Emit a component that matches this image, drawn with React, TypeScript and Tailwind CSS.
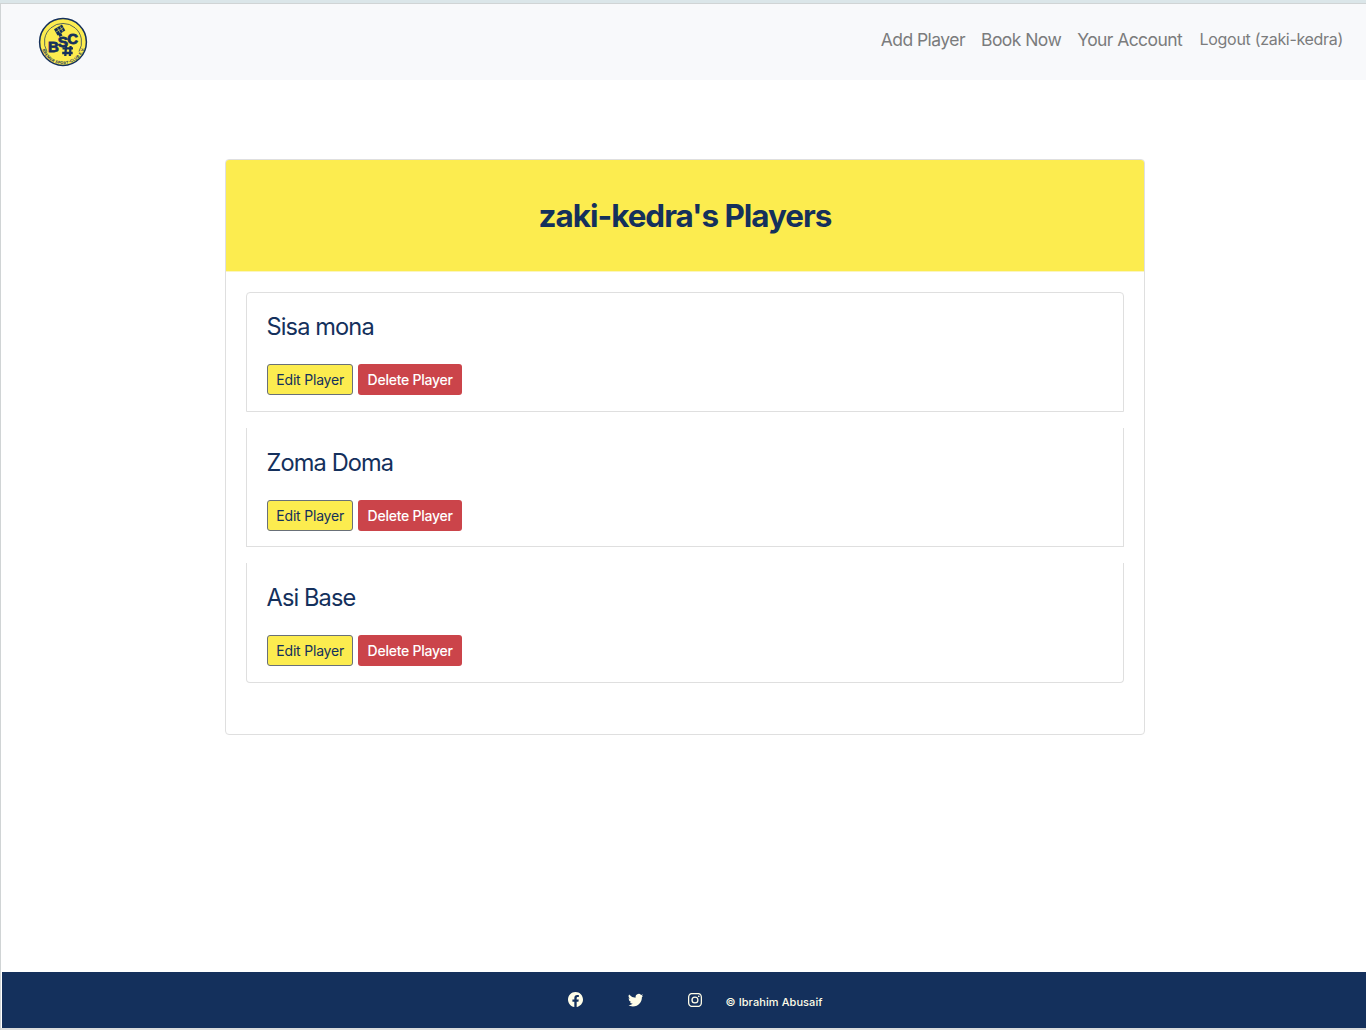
import { BsFacebook, BsInstagram, BsTwitter } from "react-icons/bs";

const players = ["Sisa mona", "Zoma Doma", "Asi Base"];

function Logo() {
  return (
    <svg width="50" height="50" viewBox="0 0 50 50" aria-label="BSC logo">
      <defs>
        <path id="ring" d="M2.9 27 A22.2 22.2 0 0 0 47.1 27" />
      </defs>
      <circle cx="25" cy="25" r="23.4" fill="#fcec4f" stroke="#14305c" strokeWidth="1.5" />
      <path d="M9 34.5 A18.6 18.6 0 1 1 41 34.5" fill="none" stroke="#14305c" strokeWidth="0.7" />
      <g fill="#14305c">
        <path d="M16 12.2 L24 7.5 L27.3 13.5 L19.5 18.5 Z" />
        <path d="M19.5 16.5 L22.6 15 L24.5 18.5 L21.5 20 Z" />
      </g>
      <path
        d="M28 29 L27.3 39 M32.6 29 L31.9 39 M24.5 31.4 H35 M24.2 36 H34.7"
        fill="none"
        stroke="#14305c"
        strokeWidth="2.3"
      />
      <path
        d="M18 15 L25.5 10.5 M19.4 10.8 L22.4 16.2 M22 9.4 L25 14.6"
        stroke="#fcec4f"
        strokeWidth="0.6"
        fill="none"
      />
      <g
        fill="#14305c"
        stroke="#14305c"
        strokeWidth="0.8"
        fontFamily="'Liberation Sans', sans-serif"
        fontWeight="700"
      >
        <text x="10" y="35" fontSize="15">B</text>
        <text x="19.8" y="29.6" fontSize="15.5">S</text>
        <text x="29.2" y="26.6" fontSize="15">C</text>
      </g>
      <text fill="#14305c" fontFamily="Inter, sans-serif" fontWeight="700" fontSize="3.8">
        <textPath href="#ring" startOffset="6" textLength="55">BREMER SPORT-CLUB E.V.</textPath>
      </text>
    </svg>
  );
}

function PlayerRow({ name, first, last }: { name: string; first: boolean; last: boolean }) {
  const edges = first
    ? "h-[120px] border rounded-t-[4px] pt-[19px]"
    : last
      ? "h-[120px] border border-t-0 rounded-b-[4px] mt-4 pt-[20px]"
      : "h-[119px] border border-t-0 mt-4 pt-[20px]";
  return (
    <li className={`border-[#dfdfdf] px-5 ${edges}`}>
      <h2 className="-ml-[0.5px] h-[29px] whitespace-nowrap text-[23.6px] leading-[29px] tracking-[-0.88px]">{name}</h2>
      <div className="mt-[23px] flex gap-[5px]">
        <button className="h-[31px] w-[86.4px] whitespace-nowrap rounded-[3px] border border-[#697078] bg-[#fcec4f] text-[14px] tracking-[-0.2px]">
          Edit Player
        </button>
        <button className="h-[31px] w-[103.5px] whitespace-nowrap rounded-[3px] bg-[#cb444a] text-[14px] font-medium tracking-[-0.25px] text-white">
          Delete Player
        </button>
      </div>
    </li>
  );
}

export default function App() {
  return (
    <div className="flex h-[1030px] w-full flex-col bg-white font-['Inter',sans-serif] text-[#14305c]">
      <div className="h-[3px] shrink-0 bg-[#dbe6e9]" />
      <div className="flex grow flex-col border-l border-t border-[#d0d4d5]">
        <nav className="flex h-[76px] shrink-0 items-start justify-between bg-[#f8f9fb] pl-[37px] pr-[23px] pt-[13px] text-[#7b7c7d]">
          <Logo />
          <div className="flex items-start gap-4 whitespace-nowrap pt-[10px] text-[17.5px] leading-[26px]">
            <a className="tracking-[-0.54px]">Add Player</a>
            <a className="tracking-[-0.56px]">Book Now</a>
            <a className="tracking-[-0.58px]">Your Account</a>
            <a className="-mt-px pl-[1.5px] text-[16px] tracking-[-0.31px]">Logout (zaki-kedra)</a>
          </div>
        </nav>
        <main className="grow">
          <section className="ml-[224px] mt-[79px] h-[576.4px] w-[920px] rounded-[4px] border border-[#dfdfdf]">
            <header className="flex h-[112px] items-center justify-center rounded-t-[3px] border-b border-[#fbf5c0] bg-[#fcec4f] bg-clip-padding pt-px">
              <h1 className="whitespace-nowrap text-[31.4px] font-bold leading-[38px] tracking-[-1px]">zaki-kedra's Players</h1>
            </header>
            <ul className="px-5 pt-5">
              {players.map((name, i) => (
                <PlayerRow key={name} name={name} first={i === 0} last={i === players.length - 1} />
              ))}
            </ul>
          </section>
        </main>
        <footer className="ml-px flex h-[56px] shrink-0 justify-center bg-[#14305c] pl-[23px] pt-5 text-[#fffde8]">
          <div className="flex w-[256px] items-start">
            <BsFacebook className="size-[15px] shrink-0" />
            <BsTwitter className="ml-[45px] size-[15.5px] shrink-0" />
            <BsInstagram className="ml-[44.5px] mt-px size-[14px] shrink-0" />
            <p className="ml-6 mt-[2px] whitespace-nowrap text-[11px] font-medium leading-4 tracking-[0.08px]">© Ibrahim Abusaif</p>
          </div>
        </footer>
        <div className="h-[2px] shrink-0 bg-[#dcdddd]" />
      </div>
    </div>
  );
}
